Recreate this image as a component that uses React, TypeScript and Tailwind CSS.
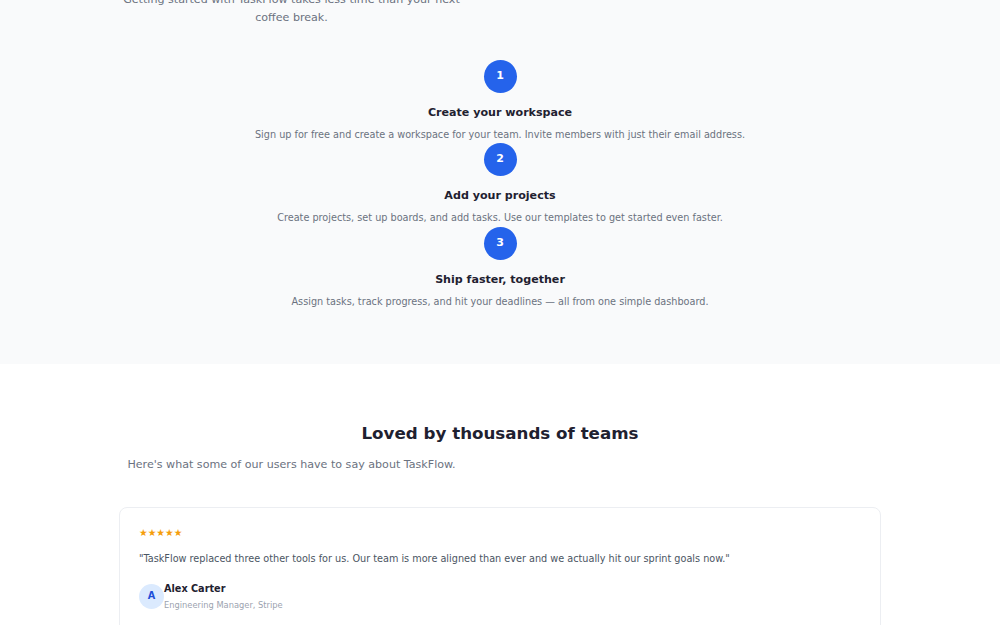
const steps = [
  {
    n: 1,
    title: "Create your workspace",
    body: "Sign up for free and create a workspace for your team. Invite members with just their email address.",
  },
  {
    n: 2,
    title: "Add your projects",
    body: "Create projects, set up boards, and add tasks. Use our templates to get started even faster.",
  },
  {
    n: 3,
    title: "Ship faster, together",
    body: "Assign tasks, track progress, and hit your deadlines — all from one simple dashboard.",
  },
];

function Step({ n, title, body }: { n: number; title: string; body: string }) {
  return (
    <div className="flex flex-col items-center pb-[1.5px] text-center">
      <div className="flex h-[33px] w-[33px] items-center justify-center rounded-full bg-[#2563eb] text-[11px] font-bold text-white">
        {n}
      </div>
      <h3 className="mt-[11px] text-[11.1px] leading-[17px] font-bold text-[#1f2130]">{title}</h3>
      <p className="mt-[7px] text-[9.7px] leading-[14px] text-[#6b7280]">{body}</p>
    </div>
  );
}

export default function App() {
  return (
    <div className="min-h-screen bg-white font-['DejaVu_Sans',sans-serif]">
      {/* how it works */}
      <section className="bg-[#f9fafb] pb-[54px]">
        <div className="mx-auto max-w-[772px]">
          <p className="mt-[-9px] w-[355px] text-center text-[11.1px] leading-[18px] text-[#6b7280]">
            Getting started with TaskFlow takes less time than your next coffee break.
          </p>
        </div>
        <div className="mt-[32.5px] flex flex-col items-center">
          {steps.map((s) => (
            <Step key={s.n} {...s} />
          ))}
        </div>
      </section>

      {/* testimonials */}
      <section className="pt-[58px] pb-10">
        <div className="mx-auto max-w-[772px]">
          <h2 className="text-center text-[16.7px] leading-[22px] font-bold text-[#1f2130]">
            Loved by thousands of teams
          </h2>
          <p className="mt-[11.5px] w-[355px] text-center text-[11.1px] leading-[17px] text-[#6b7280]">
            Here's what some of our users have to say about TaskFlow.
          </p>
          <div className="mx-[5px] mt-[34px] rounded-[8px] border border-[#eceef2] bg-white px-[19px] pt-[18px] pb-8">
            <div className="text-[9.7px] leading-[14px] text-[#f59e0b]">★★★★★</div>
            <p className="mt-[10px] text-[9.7px] leading-[18px] text-[#4b5563]">
              "TaskFlow replaced three other tools for us. Our team is more aligned than ever and we actually hit our sprint goals now."
            </p>
            <div className="mt-[14px] flex items-center">
              <div className="flex h-[25px] w-[25px] items-center justify-center rounded-full bg-[#dbeafe] text-[9.7px] font-bold text-[#1d4ed8]">
                A
              </div>
              <div>
                <div className="text-[9.7px] leading-[14px] font-bold text-[#1f2130]">Alex Carter</div>
                <div className="mt-[3px] text-[8.3px] leading-[12px] text-[#9ca3af]">Engineering Manager, Stripe</div>
              </div>
            </div>
          </div>
        </div>
      </section>
    </div>
  );
}
